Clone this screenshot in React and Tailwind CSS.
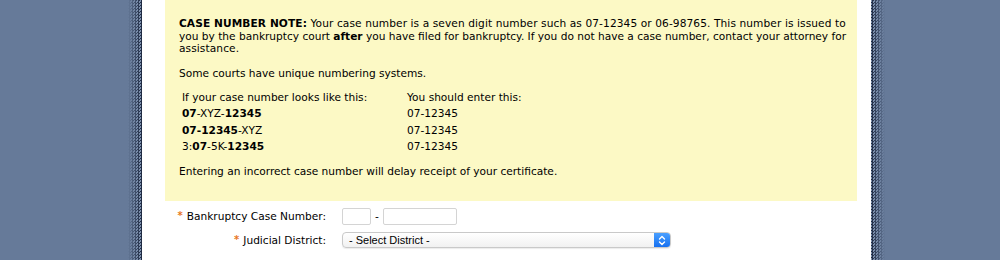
import React from "react";

const ROWS = [
  { looks: [["07", true], ["-XYZ-", false], ["12345", true]], enter: "07-12345" },
  { looks: [["07-12345", true], ["-XYZ", false]], enter: "07-12345" },
  { looks: [["3:", false], ["07", true], ["-5K-", false], ["12345", true]], enter: "07-12345" },
];

const Stripe = ({ side }) => (
  <div
    className={
      side === "left"
        ? "w-[14px] shrink-0 bg-[linear-gradient(to_right,#667a99,rgba(102,122,153,0)),repeating-conic-gradient(#1c2840_0_25%,#8093b0_0_50%)] bg-[length:100%_100%,3px_3px]"
        : "w-[14px] shrink-0 bg-[linear-gradient(to_left,#667a99,rgba(102,122,153,0)),repeating-conic-gradient(#1c2840_0_25%,#8093b0_0_50%)] bg-[length:100%_100%,3px_3px]"
    }
  />
);

const Star = () => (
  <span className="mr-[4px] align-[1px] text-[10px] font-bold text-[#e8761e]">*</span>
);

export default function App() {
  return (
    <div className="flex h-[260px] w-[1000px] overflow-hidden bg-[#667a99] pl-[128px] font-['DejaVu_Sans',Verdana,sans-serif] text-[10.6px] text-black">
      <Stripe side="left" />
      <div className="w-[729px] shrink-0 bg-white">
        <div className="ml-[23px] w-[692px] bg-[#fcf9c5] pb-[24px] pl-[14px] pr-[4px] pt-[17px] leading-[12.5px]">
          <p className="whitespace-nowrap tracking-[0.1px]">
            <b>CASE NUMBER NOTE:</b> Your case number is a seven digit number such as 07-12345 or
            06-98765. This number is issued to
            <br />
            <span className="tracking-normal">
              you by the bankruptcy court <b>after</b> you have filed for bankruptcy. If you do not
              have a case number, contact your attorney for
            </span>
            <br />
            assistance.
          </p>
          <p className="mt-[12.5px]">Some courts have unique numbering systems.</p>
          <div className="mt-[9px] ml-[3px] grid grid-cols-[225px_1fr] leading-[16.5px]">
            <div>If your case number looks like this:</div>
            <div>You should enter this:</div>
            {ROWS.map((row, i) => (
              <React.Fragment key={i}>
                <div>
                  {row.looks.map(([t, bold], j) =>
                    bold ? <b key={j}>{t}</b> : <span key={j}>{t}</span>
                  )}
                </div>
                <div>{row.enter}</div>
              </React.Fragment>
            ))}
          </div>
          <p className="mt-[10px]">Entering an incorrect case number will delay receipt of your certificate.</p>
        </div>
        <div className="ml-[23px] mt-[7px] grid grid-cols-[161px_1fr] items-center gap-x-[16px] gap-y-[7px]">
          <div className="text-right">
            <Star />Bankruptcy Case Number:
          </div>
          <div className="flex items-center">
            <div className="h-[17px] w-[29px] rounded-[2px] border border-[#d4d4d4] bg-white" />
            <span className="mx-[4px]">-</span>
            <div className="h-[17px] w-[74px] rounded-[2px] border border-[#d4d4d4] bg-white" />
          </div>
          <div className="text-right">
            <Star />Judicial District:
          </div>
          <div className="flex h-[16px] w-[329px] items-center overflow-hidden rounded-[4px] border border-[#c9c9c9] bg-[linear-gradient(#ffffff,#f1f1f1)] shadow-[0_1px_1px_rgba(0,0,0,0.08)]">
            <span className="flex-1 pl-[6px] font-['Liberation_Sans',Arial,sans-serif] text-[11px] leading-none">
              - Select District -
            </span>
            <div className="flex h-full w-[16px] items-center justify-center bg-[linear-gradient(#4aa0ff,#1670f0)]">
              <svg width="8" height="11" viewBox="0 0 8 11" fill="none" stroke="white" strokeWidth="1.4" strokeLinecap="round" strokeLinejoin="round">
                <path d="M1.5 4 L4 1.5 L6.5 4" />
                <path d="M1.5 7 L4 9.5 L6.5 7" />
              </svg>
            </div>
          </div>
        </div>
      </div>
      <Stripe side="right" />
    </div>
  );
}
